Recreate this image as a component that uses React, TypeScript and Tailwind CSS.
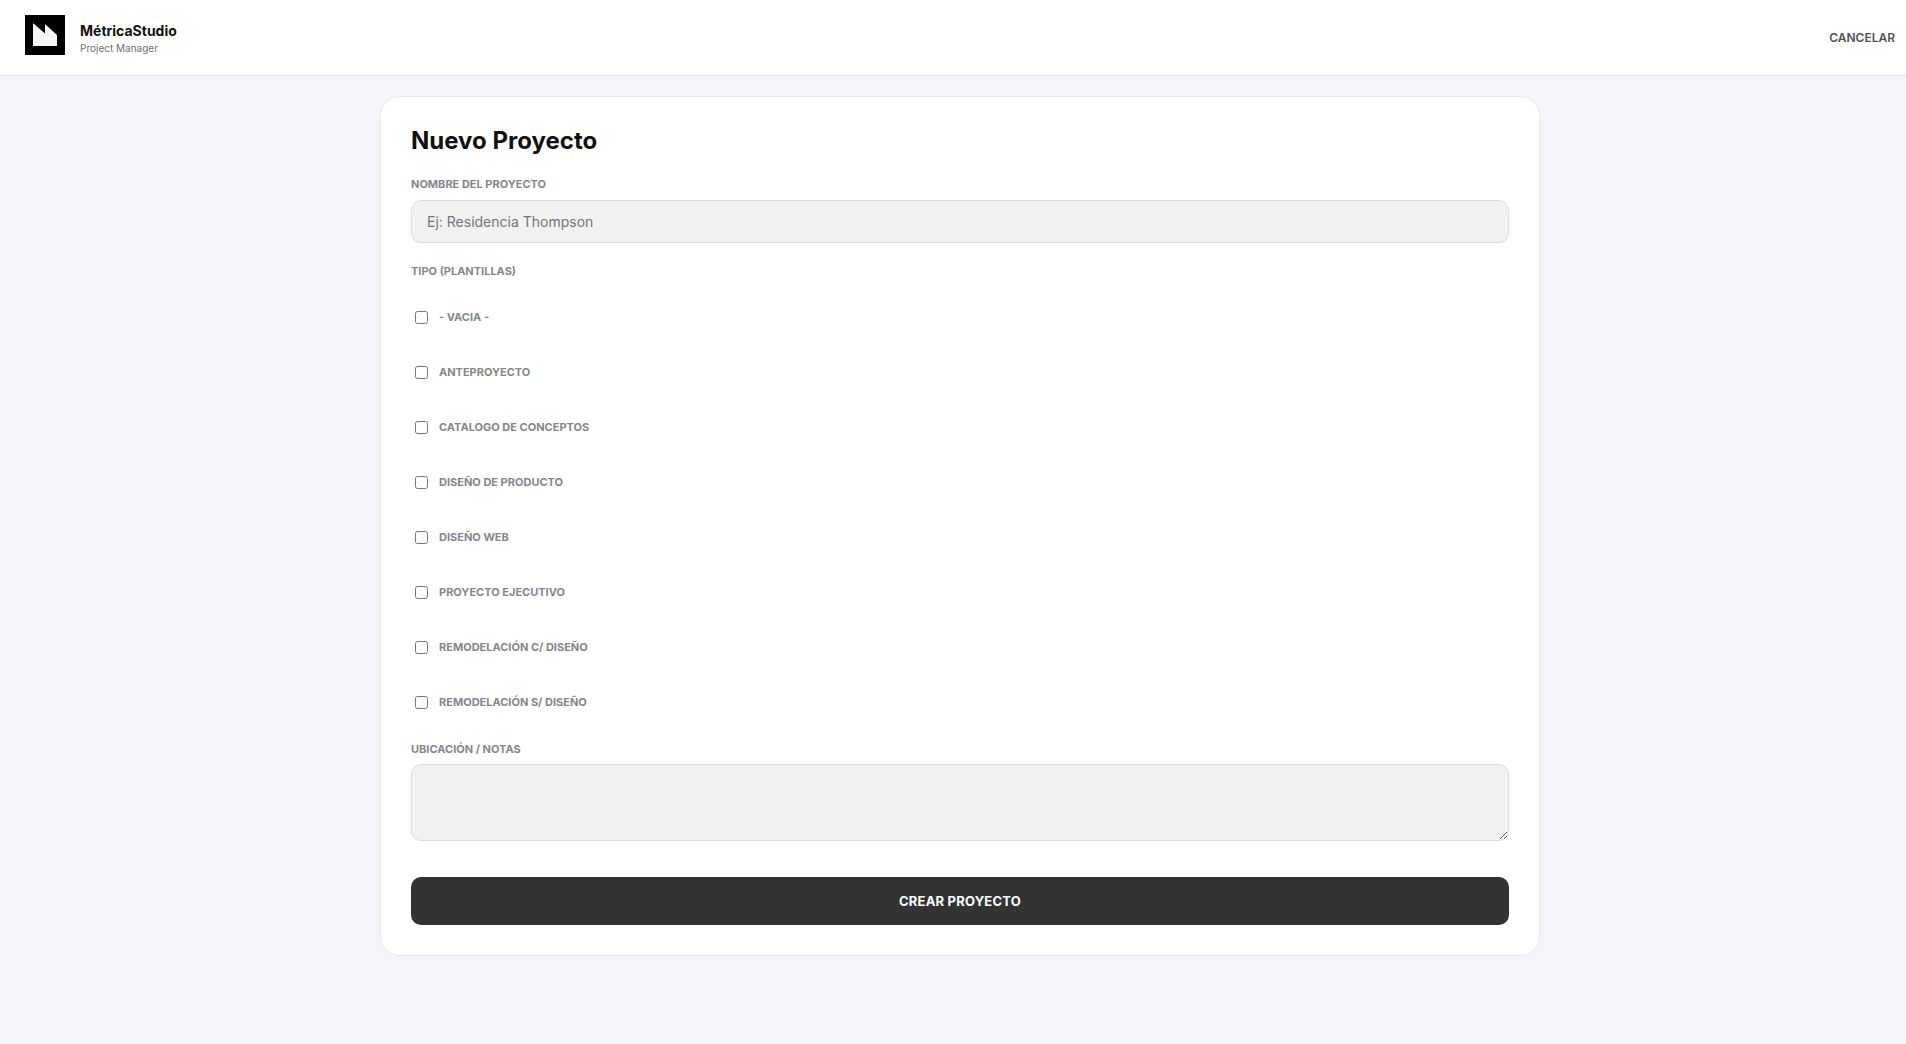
const plantillas = [
  '- VACIA -',
  'ANTEPROYECTO',
  'CATALOGO DE CONCEPTOS',
  'DISEÑO DE PRODUCTO',
  'DISEÑO WEB',
  'PROYECTO EJECUTIVO',
  'REMODELACIÓN C/ DISEÑO',
  'REMODELACIÓN S/ DISEÑO',
];

const labelClass = 'block text-[11px] leading-[17px] font-bold text-[#86868b]';

export default function App() {
  return (
    <div className="min-h-[1044px] bg-[#f4f5f9] font-['Inter',sans-serif] text-[#111]">
      {/* barra superior */}
      <header className="flex h-[76px] items-center justify-between border-b border-[#e8e8ed] bg-white pl-[25px] pr-[11px]">
        <div className="flex items-center gap-[15px]">
          <svg width="40" height="40" viewBox="0 0 40 40" className="mb-[6px] shrink-0">
            <rect width="40" height="40" fill="#000" />
            <path d="M8 8 L20 18.500 L20 9 L32 20 L32 31 L8 31 Z" fill="#f5f5f5" />
          </svg>
          <div className="mt-[2px] flex flex-col">
            <span className="text-sm leading-[17px] font-bold">MétricaStudio</span>
            <span className="mt-[3px] text-[10px] leading-[13px] text-[#6e6e73]">Project Manager</span>
          </div>
        </div>
        <button className="text-xs font-semibold text-[#515154]">CANCELAR</button>
      </header>

      <main className="flex justify-center pt-5 pl-[14px]">
        <div className="w-[1160px] rounded-[20px] border border-[#e8e8ed] bg-white px-[30px] pt-[29px] pb-[30px]">
          <h1 className="text-2xl leading-[29px] font-bold">Nuevo Proyecto</h1>

          <label className={`${labelClass} mt-[21px]`}>NOMBRE DEL PROYECTO</label>
          <input
            placeholder="Ej: Residencia Thompson"
            className="mt-[7px] block h-[43px] w-full rounded-[10px] border border-[#dcdcdc] bg-[#f1f1f1] px-[15px] text-sm outline-none placeholder:text-[#757575]"
          />

          <label className={`${labelClass} mt-[20px]`}>TIPO (PLANTILLAS)</label>
          <div className="mt-[10px] flex flex-col">
            {plantillas.map((nombre) => (
              <label key={nombre} className="flex h-[55px] items-center gap-[11px] pl-1">
                <span className="size-[13px] shrink-0 rounded-[2.500px] border border-[#767676] bg-white" />
                <input type="checkbox" className="sr-only" />
                <span className="text-[11px] font-bold text-[#86868b]">{nombre}</span>
              </label>
            ))}
          </div>

          <label className={`${labelClass} mt-[11px]`}>UBICACIÓN / NOTAS</label>
          <textarea className="mt-[6px] block h-[77px] w-full rounded-[10px] border border-[#dcdcdc] bg-[#f1f1f1] outline-none" />

          <button className="mt-9 h-[48px] w-full rounded-[10px] bg-[#333] pt-[1px] text-[13px] font-bold tracking-[0.2px] text-white">
            CREAR PROYECTO
          </button>
        </div>
      </main>
    </div>
  );
}
